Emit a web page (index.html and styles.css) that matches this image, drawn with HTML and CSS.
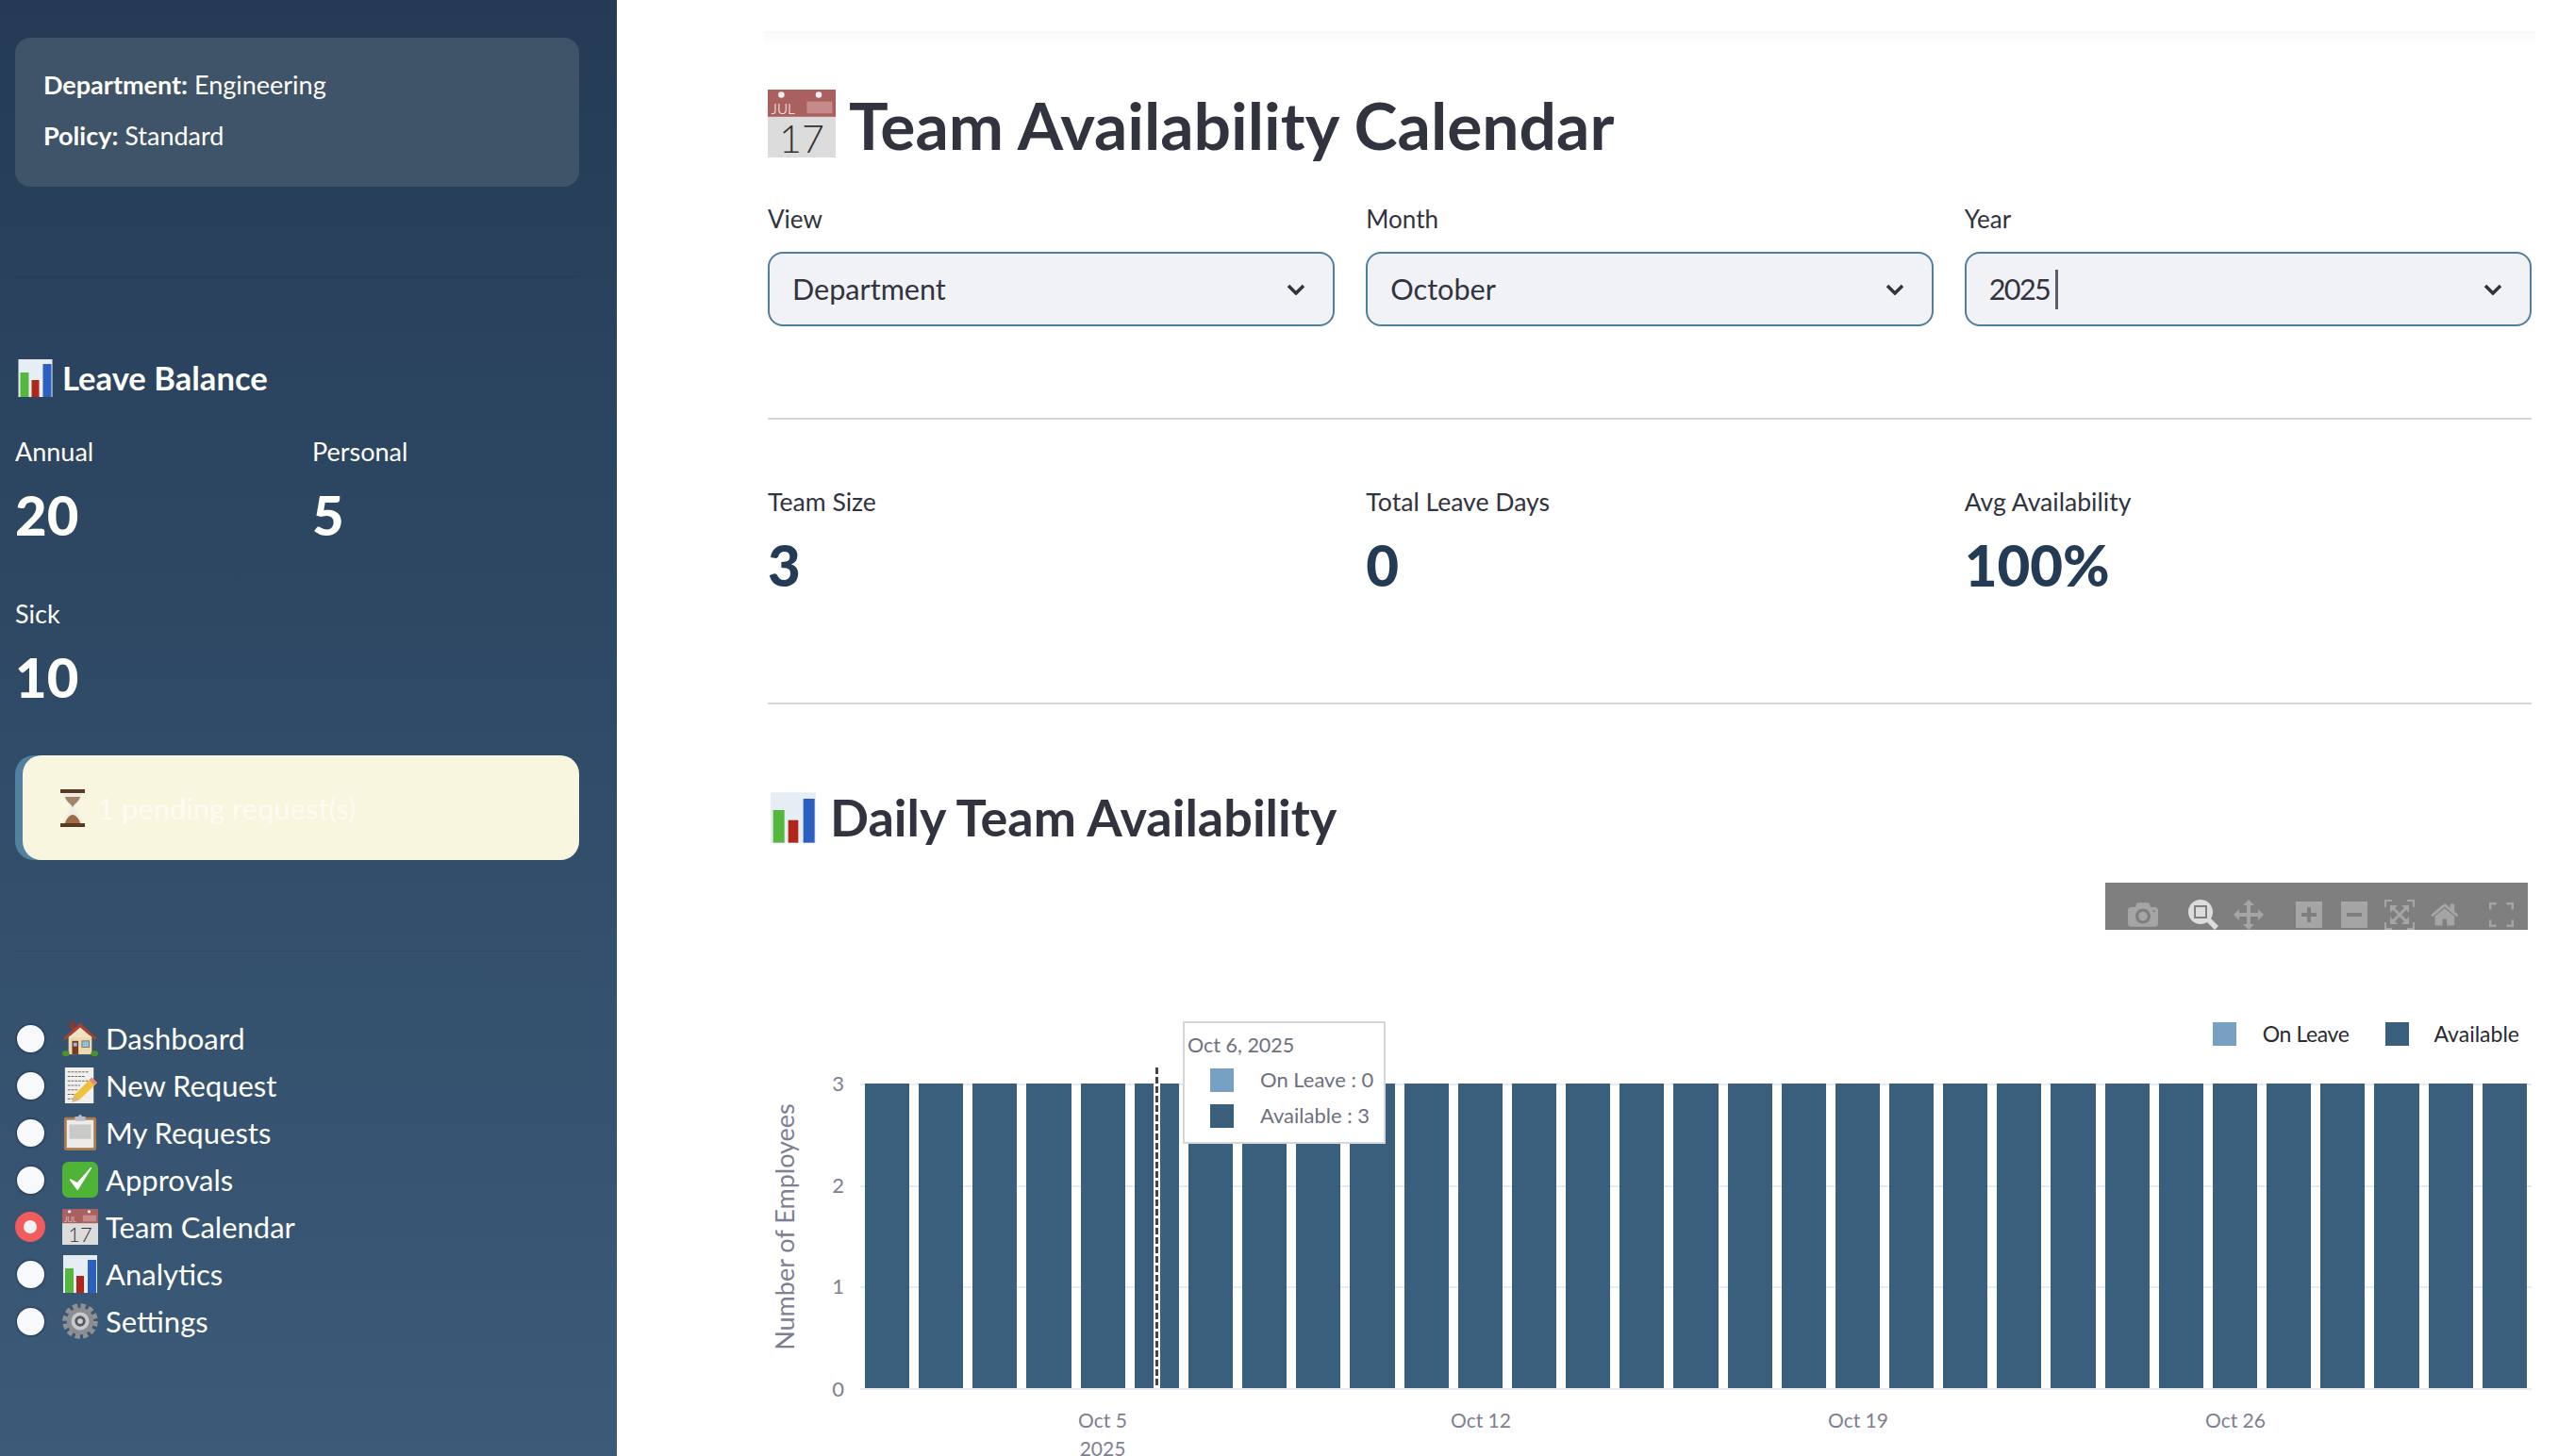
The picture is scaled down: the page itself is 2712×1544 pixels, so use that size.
FILE: index.html
```html
<!DOCTYPE html>
<html lang="en">
<head>
<meta charset="utf-8">
<title>Team Availability Calendar</title>
<link rel="stylesheet" href="styles.css">
</head>
<body>
<svg class="defs" xmlns="http://www.w3.org/2000/svg">
  <symbol id="e-cal" viewBox="0 0 40 40">
    <rect width="40" height="40" fill="#dcdcdc"/>
    <rect width="40" height="16" fill="#ab6060"/>
    <circle cx="8" cy="3" r="1.800" fill="#eef2f5"/><circle cx="30" cy="3" r="1.800" fill="#eef2f5"/>
    <rect x="23" y="7" width="15" height="7" fill="#c58b8b"/>
    <text x="2" y="14.500" class="cal-mon">JUL</text>
    <text x="20" y="37" class="cal-day">17</text>
  </symbol>
  <symbol id="e-chart" viewBox="0 0 36 40">
    <rect width="36" height="40" fill="#e6edf5"/>
    <rect x="2" y="14" width="9" height="26" fill="#55b83c"/>
    <rect x="14" y="22" width="8" height="18" fill="#b0261a"/>
    <rect x="26" y="5" width="9" height="35" fill="#2b5fc0"/>
  </symbol>
  <symbol id="e-house" viewBox="0 0 40 40">
    <rect x="9" y="1" width="5" height="9" fill="#8c3b2a"/>
    <rect x="7" y="17" width="26" height="21" fill="#ecd9ae"/>
    <path d="M1 20 20 3l19 17-2 2L20 8 3 22z" fill="#a8402e"/>
    <path d="M20 8 7 19h26z" fill="#f2e3c0"/>
    <rect x="11" y="23" width="7" height="15" fill="#7b3b22"/>
    <rect x="12.500" y="25" width="4" height="4" fill="#8fc1e0"/>
    <rect x="22" y="23" width="8" height="7" fill="#8fc1e0" stroke="#8a7456"/>
    <ellipse cx="4" cy="37" rx="4" ry="3" fill="#4f8f2c"/><ellipse cx="36" cy="37" rx="4" ry="3" fill="#4f8f2c"/>
  </symbol>
  <symbol id="e-memo" viewBox="0 0 40 40">
    <rect x="3" y="0" width="32" height="40" fill="#f1f0ec"/>
    <path d="M6 5h24M6 10h20M6 15h24M6 20h14M6 25h12M6 30h10M6 35h8" stroke="#6a6a6a" stroke-width="1.300" stroke-dasharray="3 1"/>
    <path d="M33 11 39 17 19 36 11 39 13 31z" fill="#f0c23b"/>
    <path d="M33 11 39 17 36 20 30 14z" fill="#e58a8a"/>
    <path d="M11 39 13 31 19 36z" fill="#d9b68a"/>
  </symbol>
  <symbol id="e-clip" viewBox="0 0 40 40">
    <rect x="2" y="3" width="36" height="37" rx="2" fill="#a87c4e"/>
    <rect x="5" y="6" width="30" height="31" fill="#ececea"/>
    <rect x="8" y="11" width="24" height="16" fill="#c9c9c7"/>
    <rect x="14" y="2" width="12" height="5" rx="1" fill="#b9bec4"/><circle cx="20" cy="2" r="2" fill="#b9bec4"/>
  </symbol>
  <symbol id="e-check" viewBox="0 0 40 40">
    <rect width="40" height="40" rx="7" fill="#4fb338"/>
    <path d="M9 20 17 31 32 7 17 24z" fill="#fff" stroke="#fff" stroke-width="1.500" stroke-linejoin="round"/>
  </symbol>
  <symbol id="e-gear" viewBox="0 0 40 40">
    <circle cx="20" cy="20" r="17" fill="none" stroke="#8f9193" stroke-width="5.500" stroke-dasharray="5.500 3.400"/>
    <circle cx="20" cy="20" r="15" fill="#8b8d90"/>
    <circle cx="20" cy="20" r="10" fill="#c7c9cb"/>
    <circle cx="20" cy="20" r="6" fill="#55585c"/>
    <circle cx="20" cy="20" r="3" fill="#cfd2d5"/>
  </symbol>
  <symbol id="e-hour" viewBox="0 0 28 40">
    <rect x="1" y="0" width="26" height="4" fill="#5c3a22"/>
    <rect x="1" y="36" width="26" height="4" fill="#5c3a22"/>
    <path d="M4 4h20c0 9-7 11-8 16 1 5 8 7 8 16H4c0-9 7-11 8-16C11 15 4 13 4 4z" fill="#efece6"/>
    <path d="M6 8h16c-1 5-6 7-8 11C12 15 7 13 6 8z" fill="#a38465"/>
    <path d="M14 27c3 0 7 4 8 9H6c1-5 5-9 8-9z" fill="#9a6d47"/>
  </symbol>
</svg>

<div class="app">
  <aside class="sidebar">
    <div class="userbox">
      <p class="userline"><b>Department:</b> Engineering</p>
      <p class="userline"><b>Policy:</b> Standard</p>
    </div>
    <hr class="side-rule first">
    <h3 class="side-heading"><svg class="emoji-chart-sm"><use href="#e-chart"/></svg>Leave Balance</h3>
    <div class="balances">
      <div><div class="bal-label">Annual</div><div class="bal-value">20</div></div>
      <div><div class="bal-label">Personal</div><div class="bal-value">5</div></div>
      <div><div class="bal-label">Sick</div><div class="bal-value">10</div></div>
    </div>
    <div class="pending">
      <div class="pending-inner"><svg class="emoji-hour"><use href="#e-hour"/></svg><span class="pending-text">1 pending request(s)</span></div>
    </div>
    <hr class="side-rule second">
    <nav class="nav">
      <div class="nav-row"><span class="radio"></span><svg class="emoji"><use href="#e-house"/></svg><span>Dashboard</span></div>
      <div class="nav-row"><span class="radio"></span><svg class="emoji"><use href="#e-memo"/></svg><span>New Request</span></div>
      <div class="nav-row"><span class="radio"></span><svg class="emoji"><use href="#e-clip"/></svg><span>My Requests</span></div>
      <div class="nav-row"><span class="radio"></span><svg class="emoji"><use href="#e-check"/></svg><span>Approvals</span></div>
      <div class="nav-row"><span class="radio on"></span><svg class="emoji"><use href="#e-cal"/></svg><span>Team Calendar</span></div>
      <div class="nav-row"><span class="radio"></span><svg class="emoji"><use href="#e-chart"/></svg><span>Analytics</span></div>
      <div class="nav-row"><span class="radio"></span><svg class="emoji"><use href="#e-gear"/></svg><span>Settings</span></div>
    </nav>
  </aside>

  <main class="main">
    <div class="topfade"></div>
    <h1 class="title"><svg class="emoji-title"><use href="#e-cal"/></svg>Team Availability Calendar</h1>

    <div class="cols filters">
      <div>
        <label class="field-label">View</label>
        <div class="select"><span>Department</span><svg class="chev" viewBox="0 0 20 12"><path d="M2 2l8 8 8-8"/></svg></div>
      </div>
      <div>
        <label class="field-label">Month</label>
        <div class="select"><span>October</span><svg class="chev" viewBox="0 0 20 12"><path d="M2 2l8 8 8-8"/></svg></div>
      </div>
      <div>
        <label class="field-label">Year</label>
        <div class="select"><span class="digits">2025</span><i class="caret"></i><svg class="chev" viewBox="0 0 20 12"><path d="M2 2l8 8 8-8"/></svg></div>
      </div>
    </div>

    <hr class="rule">

    <div class="cols stats">
      <div><div class="stat-label">Team Size</div><div class="stat-value">3</div></div>
      <div><div class="stat-label">Total Leave Days</div><div class="stat-value">0</div></div>
      <div><div class="stat-label">Avg Availability</div><div class="stat-value">100%</div></div>
    </div>

    <hr class="rule">

    <h2 class="section"><svg class="emoji-section"><use href="#e-chart"/></svg>Daily Team Availability</h2>

    <div class="chart">
      <div class="modebar">
        <span class="mb mb-end"><svg viewBox="0 0 1000 1000"><path transform="matrix(1 0 0 -1 0 850)" d="m500 450c-83 0-150-67-150-150 0-83 67-150 150-150 83 0 150 67 150 150 0 83-67 150-150 150z m400 150h-120c-16 0-34 13-39 29l-31 93c-6 15-23 28-40 28h-340c-16 0-34-13-39-28l-31-94c-6-15-23-28-40-28h-120c-55 0-100-45-100-100v-450c0-55 45-100 100-100h800c55 0 100 45 100 100v450c0 55-45 100-100 100z m-400-550c-138 0-250 112-250 250 0 138 112 250 250 250 138 0 250-112 250-250 0-138-112-250-250-250z m365 380c-19 0-35 16-35 35 0 19 16 35 35 35 19 0 35-16 35-35 0-19-16-35-35-35z"/></svg></span>
        <span class="mb active"><svg viewBox="0 0 1000 1000"><path transform="matrix(1 0 0 -1 0 850)" d="m1000-25l-250 251c40 63 63 138 63 218 0 224-182 406-407 406-224 0-406-182-406-406s183-406 407-406c80 0 155 22 218 62l250-250 125 125z m-812 250l0 438 437 0 0-438-437 0z m62 375l313 0 0-312-313 0 0 312z"/></svg></span>
        <span class="mb mb-end"><svg viewBox="0 0 1000 1000"><path transform="matrix(1 0 0 -1 0 850)" d="m1000 350l-187 188 0-125-250 0 0 250 125 0-188 187-187-187 125 0 0-250-250 0 0 125-188-188 186-187 0 125 252 0 0-250-125 0 187-188 188 188-125 0 0 250 250 0 0-126 187 188z"/></svg></span>
        <span class="mb"><svg viewBox="0 0 875 1000"><path transform="matrix(1 0 0 -1 0 850)" d="m1 787l0-875 875 0 0 875-875 0z m687-500l-187 0 0-187-125 0 0 187-188 0 0 125 188 0 0 187 125 0 0-187 187 0 0-125z"/></svg></span>
        <span class="mb"><svg viewBox="0 0 875 1000"><path transform="matrix(1 0 0 -1 0 850)" d="m0 788l0-876 875 0 0 876-875 0z m688-500l-500 0 0 125 500 0 0-125z"/></svg></span>
        <span class="mb"><svg viewBox="0 0 1000 1000"><path transform="matrix(1 0 0 -1 0 850)" d="m250 850l-187 0-63 0 0-62 0-188 63 0 0 188 187 0 0 62z m688 0l-188 0 0-62 188 0 0-188 62 0 0 188 0 62-62 0z m-875-938l0 188-63 0 0-188 0-62 63 0 187 0 0 62-187 0z m875 188l0-188-188 0 0-62 188 0 62 0 0 62 0 188-62 0z m-125 188l-1 0-93-94-156 156 156 156 92-93 2 0 0 250-250 0 0-2 93-92-156-156-156 156 94 92 0 2-250 0 0-250 0 0 93 93 157-156-157-156-93 94 0 0 0-250 250 0 0 0-94 93 156 157 156-157-93-93 0 0 250 0 0 250z"/></svg></span>
        <span class="mb mb-gap"><svg viewBox="0 0 929 1000"><path transform="matrix(1 0 0 -1 0 850)" d="m786 296v-267q0-15-11-26t-25-10h-214v214h-143v-214h-214q-15 0-25 10t-11 26v267q0 1 0 2t0 2l321 264 321-264q1-1 1-4z m124 39l-34-41q-5-5-12-6h-2q-7 0-12 3l-386 322-386-322q-7-4-13-4-7 2-12 7l-35 41q-4 5-3 13t6 12l401 334q18 15 42 15t43-15l136-114v109q0 8 5 13t13 5h107q8 0 13-5t5-13v-227l122-102q5-5 6-12t-4-13z"/></svg></span>
        <span class="mb"><svg class="fs" viewBox="0 0 24 24"><path d="M1 7V1h6M17 1h6v6M23 17v6h-6M7 23H1v-6"/></svg></span>
      </div>

      <div class="legend">
        <span class="swatch light"></span><span class="legend-text tight">On Leave</span>
        <span class="swatch dark"></span><span class="legend-text">Available</span>
      </div>

      <div class="ytitle">Number of Employees</div>
      <span class="ytick t3">3</span><span class="ytick t2">2</span><span class="ytick t1">1</span><span class="ytick t0">0</span>

      <div class="plot">
        <div class="grid"><i></i><i></i><i></i><i></i></div>
        <div class="bars">
          <i></i><i></i><i></i><i></i><i></i><i></i><i></i><i></i><i></i><i></i><i></i><i></i><i></i><i></i><i></i><i></i>
          <i></i><i></i><i></i><i></i><i></i><i></i><i></i><i></i><i></i><i></i><i></i><i></i><i></i><i></i><i></i>
        </div>
      </div>

      <span class="xtick x5">Oct 5<br>2025</span>
      <span class="xtick x12">Oct 12</span>
      <span class="xtick x19">Oct 19</span>
      <span class="xtick x26">Oct 26</span>

      <div class="spike"></div>

      <div class="tooltip">
        <div class="tip-title">Oct 6, 2025</div>
        <div class="tip-row first"><span class="tip-swatch light"></span><span>On Leave : 0</span></div>
        <div class="tip-row"><span class="tip-swatch dark"></span><span>Available : 3</span></div>
      </div>
    </div>
  </main>
</div>
</body>
</html>
```

FILE: styles.css
```css
* { box-sizing: border-box; }
html, body { margin: 0; height: 1544px; overflow: hidden; background: #fff; }
body { font-family: "Lato", "Noto Sans", sans-serif; color: #31333f; }
.defs { display: none; }
.cal-mon { font: 300 8.500px "Lato", sans-serif; fill: #fff; }
.cal-day { font: 300 23px "Lato", sans-serif; fill: #333; text-anchor: middle; }

.app { display: flex; height: 1544px; }

/* sidebar */
.sidebar {
  width: 654px; flex: none; height: 1544px; overflow: hidden;
  padding: 40px 40px 0 16px;
  background: linear-gradient(180deg, #253b55 0%, #3b5b79 100%);
  color: #fefefa;
}
.userbox {
  height: 158px; padding: 33px 30px 0; border-radius: 16px;
  background: #3f5469;
  display: flex; flex-direction: column; gap: 20px;
}
.userline { margin: 0; font-size: 27px; line-height: 34px; }
.userline b { font-weight: 700; }
.side-rule { border: 0; height: 1px; margin: 0; background: rgba(20, 35, 55, 0.16); }
.side-rule.first { margin-top: 95px; }
.side-rule.second { margin-top: 96px; }
.side-heading {
  display: flex; align-items: center; gap: 10px;
  margin: 85px 0 0; height: 44px; font-size: 34.600px; line-height: 44px; font-weight: 700;
}
.emoji-chart-sm { width: 37px; height: 40px; margin-left: 3px; flex: none; }
.balances { display: grid; grid-template-columns: 283px 283px; column-gap: 32px; row-gap: 53px; margin-top: 39px; }
.bal-label { font-size: 27px; line-height: 34px; }
.bal-value { font-size: 58px; line-height: 70px; font-weight: 900; margin-top: 15px; }
.pending { margin-top: 48px; height: 111px; border-radius: 20px; padding-left: 8px; background: #52809f; }
.pending-inner {
  height: 111px; border-radius: 20px; background: #f9f6e0;
  display: flex; align-items: center; padding-left: 38px; gap: 11px;
}
.emoji-hour { width: 30px; height: 40px; flex: none; }
.pending-text { color: #fdfcf2; font-size: 31px; line-height: 38px; }
.nav { margin-top: 67px; }
.nav-row { display: flex; align-items: center; height: 50px; font-size: 31px; line-height: 48px; color: #fefefa; }
.radio {
  width: 29px; height: 29px; margin: 0 19px 0 2px; flex: none; border-radius: 50%;
  background: #f8f9fc; box-shadow: 0 0 2px 1px rgba(25, 40, 60, 0.6);
}
.radio.on {
  width: 32px; height: 32px; margin: 0 18px 0 0; background: #f25c5c; box-shadow: none;
  border: 9px solid #f25c5c;
}
.radio.on::after { content: ""; display: block; width: 14px; height: 14px; border-radius: 50%; background: #f0f2f6; }
.emoji { width: 38px; height: 40px; flex: none; margin-right: 8px; }

/* main */
.main { flex: 1; min-width: 0; padding: 33px 28px 0 160px; overflow: hidden; }
.topfade { height: 18px; margin: 0 -4px; background: linear-gradient(180deg, #f8f9f8, #fff); }
.title {
  display: flex; align-items: flex-start; gap: 14px;
  margin: 44px 0 0; height: 72px; font-size: 69.600px; line-height: 74px; font-weight: 700; color: #31333f;
}
.emoji-title { width: 72px; height: 72px; flex: none; }
.cols { display: grid; grid-template-columns: repeat(3, 1fr); column-gap: 33px; }
.filters { margin-top: 49px; }
.field-label { display: block; font-size: 26px; line-height: 32px; height: 32px; }
.select {
  display: flex; align-items: center; height: 79px; margin-top: 19px; padding: 0 29px 0 24px;
  border: 2px solid #4f7e9e; border-radius: 16px; background: #f0f2f6;
  font-size: 30.600px;
}
.digits { letter-spacing: -1.600px; }
.caret { width: 3px; height: 42px; margin-left: 6px; background: #5a5c68; }
.chev { width: 20px; height: 12px; margin-left: auto; }
.chev path { fill: none; stroke: #31333f; stroke-width: 3.500; }
.rule { border: 0; height: 2px; margin: 0; background: #d6d6d6; }
.filters + .rule { margin-top: 97px; }
.stats { height: 300px; padding-top: 70px; }
.stat-label { font-size: 26.600px; line-height: 34px; }
.stat-value { font-size: 60px; line-height: 70px; font-weight: 900; color: #243b55; margin-top: 15px; }
.section {
  display: flex; align-items: center; gap: 15px;
  margin: 92px 0 0 3px; height: 56px; font-size: 54px; line-height: 56px; font-weight: 700;
}
.emoji-section { width: 48px; height: 56px; flex: none; }

/* chart */
.chart { position: relative; height: 610px; margin-top: 41px; overflow: hidden; }
.modebar {
  display: flex; width: 448px; height: 50px; margin-left: auto; margin-right: 4px; padding-left: 16px;
  overflow: hidden; background: #7f7f7f;
}
.mb { flex: none; width: 48px; height: 68px; display: flex; align-items: center; justify-content: center; }
.mb svg { height: 32px; width: auto; flex: none; display: block; }
.mb svg path { fill: #a5a5a5; }
.mb.active svg path { fill: #dcdcdc; }
.mb-end { margin-right: 16px; }
.mb-gap { margin-right: 12px; }
.mb svg.fs { height: 26px; width: 26px; }
.mb svg.fs path { fill: none; stroke: #a5a5a5; stroke-width: 2.500; }
.legend {
  position: absolute; top: 148px; right: 13px; display: flex; align-items: center;
  font-size: 23px; line-height: 25px; color: #2a2a33;
}
.swatch { width: 25px; height: 25px; }
.swatch.light, .tip-swatch.light { background: #78a0c2; }
.swatch.dark, .tip-swatch.dark { background: #3a5f7d; }
.legend-text { margin-left: 26px; margin-right: 39px; }
.legend-text.tight { margin-left: 28px; letter-spacing: -0.400px; }
.legend-text:last-child { margin-right: 0; }
.ytitle {
  position: absolute; left: 17px; top: 365px; width: 0; height: 0; white-space: nowrap;
  display: flex; justify-content: center; align-items: center;
  transform: rotate(-90deg); font-size: 27px; color: #7d8093;
}
.ytick { position: absolute; right: calc(100% - 81px); font-size: 22px; line-height: 28px; color: #7d8093; }
.t3 { top: 199px; } .t2 { top: 307px; } .t1 { top: 414px; } .t0 { top: 523px; }
.plot { position: absolute; left: 98px; right: 0; top: 213px; height: 325px; }
.grid { position: absolute; inset: 0; display: flex; flex-direction: column; justify-content: space-between; }
.grid i { display: block; height: 2px; background: #e8ebf2; }
.bars { position: absolute; top: 0; left: 5px; right: 5px; height: 323px; display: flex; gap: 10px; }
.bars i { flex: 1; background: #3a5f7d; }
.xtick {
  position: absolute; top: 555px; transform: translateX(-50%); text-align: center;
  font-size: 21px; line-height: 30px; color: #7d8093; white-space: nowrap;
}
.x5 { left: 355px; } .x12 { left: 756px; } .x19 { left: 1156px; } .x26 { left: 1556px; }
.spike {
  position: absolute; left: 409px; top: 196px; width: 7px; height: 340px;
  border-left: 2px solid #fff; border-right: 2px solid #fff; background: repeating-linear-gradient(180deg, #444 0 7px, #fff 7px 10px);
}
.tooltip {
  position: absolute; left: 440px; top: 147px; width: 215px; height: 130px; padding: 8px 0 0 3px;
  border: 2px solid #d6d6d6; background: #fff; color: #6d7080; font-size: 22px; line-height: 30px; white-space: nowrap;
}
.tip-title { font-size: 21.500px; }
.tip-row { display: flex; align-items: center; height: 38px; }
.tip-row.first { margin-top: 3px; }
.tip-swatch { width: 25px; height: 25px; margin: 0 28px 0 24px; flex: none; }
```
